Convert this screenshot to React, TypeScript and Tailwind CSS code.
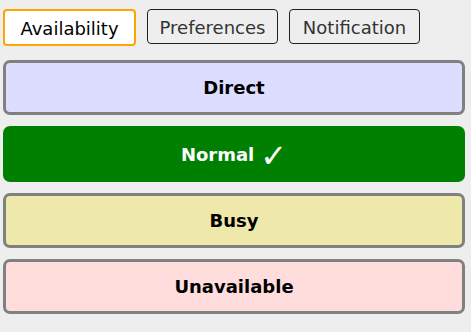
import React from "react";

export default function App() {
  const font = { fontFamily: '"DejaVu Sans", Verdana, sans-serif' };
  return (
    <div className="min-h-screen w-full bg-[#eeeeee]" style={font}>
      <div className="pl-[3px] pr-[6px] pt-[9px]">
        <div className="flex items-start gap-[11px]">
          <button className="h-[37px] w-[133px] rounded-[4px] border-2 border-[#ffa500] bg-white pt-[1px] text-[18px] text-black">
            Availability
          </button>
          <button className="h-[35px] w-[131px] rounded-[4px] border border-[#222] bg-[#eeeeee] pt-[1px] text-[18px] text-[#333]">
            Preferences
          </button>
          <button className="h-[35px] w-[131px] rounded-[4px] border border-[#222] bg-[#eeeeee] pt-[1px] text-[18px] text-[#333]">
            Notification
          </button>
        </div>
        <div className="mt-[14px] flex flex-col gap-[11px]">
          <button className="flex h-[55px] w-full items-center justify-center rounded-[7px] border-[3px] border-[#808080] bg-[#ddddff] text-[18px] font-bold text-black">
            Direct
          </button>
          <button className="flex h-[56px] w-full items-center justify-center rounded-[7px] bg-[#008000] text-[18px] font-bold text-white">
            <span>Normal</span>
            <span className="ml-[6px] mt-[3px] text-[32px] leading-none">✓</span>
          </button>
          <button className="flex h-[55px] w-full items-center justify-center rounded-[7px] border-[3px] border-[#808080] bg-[#eee8aa] text-[18px] font-bold text-black">
            Busy
          </button>
          <button className="flex h-[55px] w-full items-center justify-center rounded-[7px] border-[3px] border-[#808080] bg-[#ffdddd] text-[18px] font-bold text-black">
            Unavailable
          </button>
        </div>
      </div>
    </div>
  );
}
